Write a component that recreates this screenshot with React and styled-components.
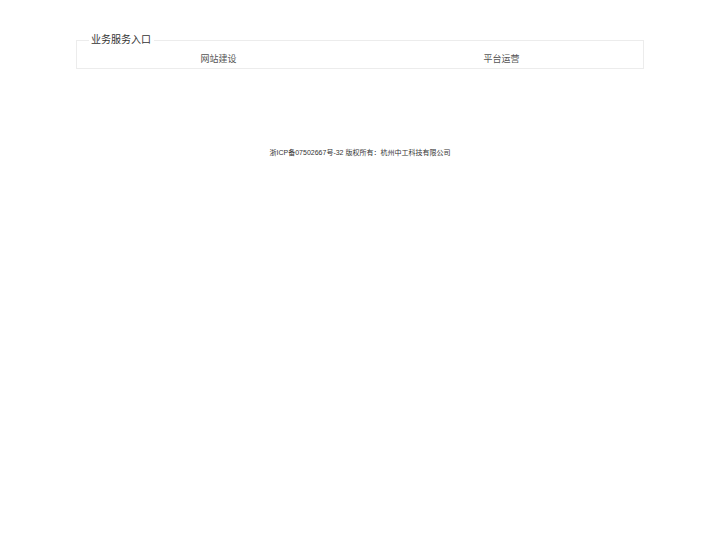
import React from 'react';
import styled, { createGlobalStyle } from 'styled-components';

const GlobalStyle = createGlobalStyle`
  html, body {
    margin: 0;
    padding: 0;
    background: #fff;
    font-family: 'Liberation Sans', 'Noto Sans CJK SC', sans-serif;
    color: #333;
  }
`;

const services = ['网站建设', '平台运营'];

const App = () => {
  return (
    <>
      <GlobalStyle />
      <Page>
        <Entry>
          <Legend>业务服务入口</Legend>
          <Row>
            {services.map((name) => (
              <Item key={name}>{name}</Item>
            ))}
          </Row>
        </Entry>
        <Footer>浙ICP备07502667号-32 版权所有：杭州中工科技有限公司</Footer>
      </Page>
    </>
  );
};

const Page = styled.div`
  padding-top: 34px;
`;

const Entry = styled.fieldset`
  width: 568px;
  box-sizing: border-box;
  margin: 0 auto;
  padding: 0 0 3px;
  border: 1px solid #ececec;
  min-inline-size: 0;
`;

const Legend = styled.legend`
  margin-left: 12px;
  padding: 0 3px 0 2px;
  font-size: 10px;
  line-height: 12px;
  color: #333;
`;

const Row = styled.div`
  display: flex;
  padding-top: 7px;
`;

const Item = styled.div`
  flex: 1;
  text-align: center;
  font-size: 9px;
  line-height: 12px;
  color: #555;
`;

const Footer = styled.div`
  margin-top: 79px;
  text-align: center;
  font-size: 7px;
  line-height: 10px;
  color: #333;
`;

export default App;
